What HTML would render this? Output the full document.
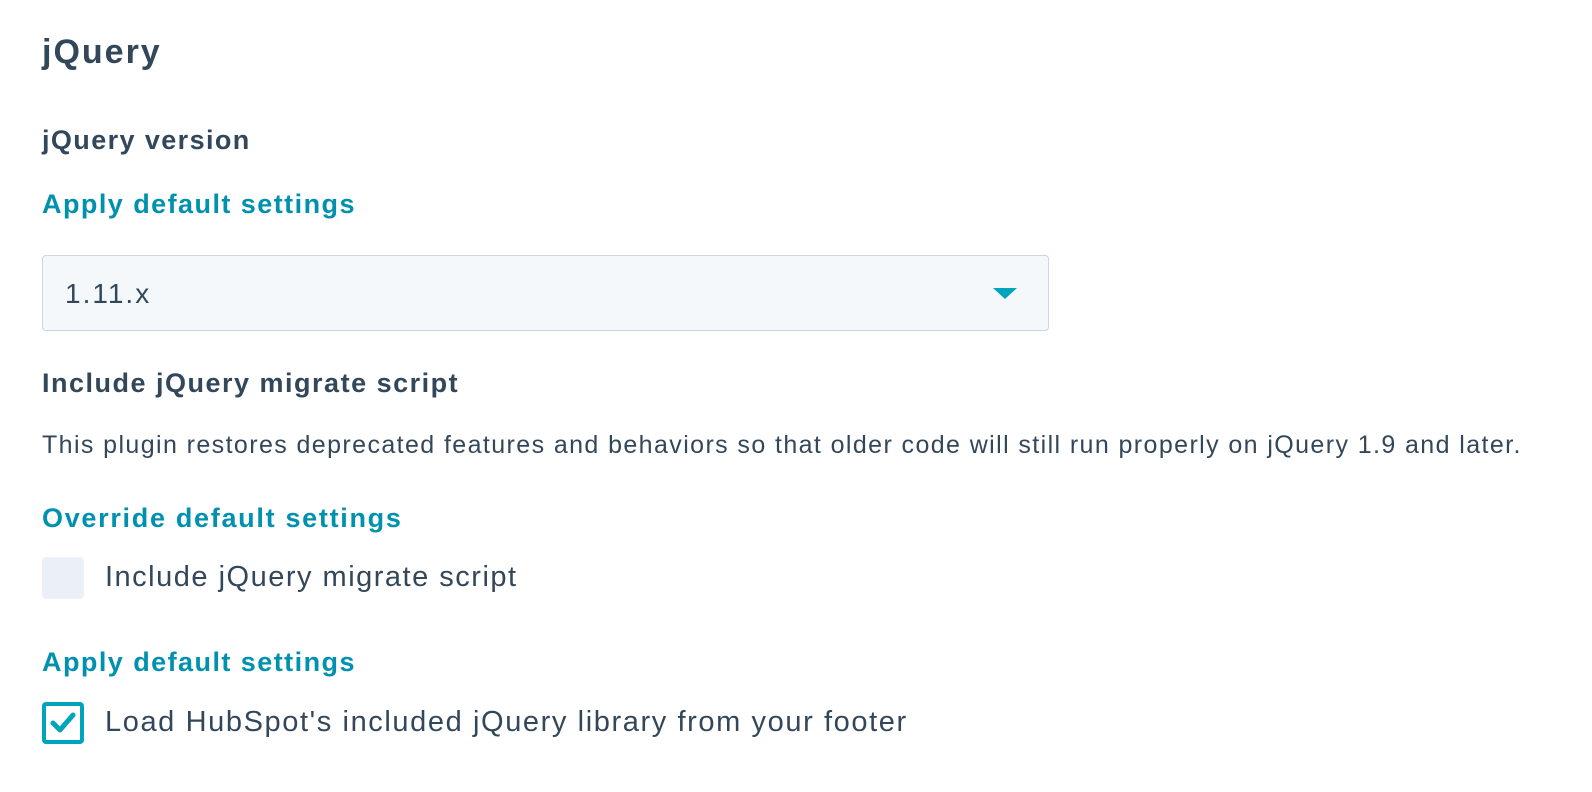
<!DOCTYPE html>
<html><head><meta charset="utf-8"><style>
body{margin:0;width:1592px;height:792px;background:#fff;font-family:"Liberation Sans",sans-serif;color:#33475b;position:relative;overflow:hidden}
.t{position:absolute;left:42px;white-space:nowrap;line-height:1}
.b{font-weight:bold}
.teal{color:#0091ae;font-weight:bold}
.sel{position:absolute;left:42px;top:255px;width:1005px;height:74px;background:#f5f8fa;border:1px solid #cbd6e2;border-radius:4px}
.cb{position:absolute;left:42px;width:42px;height:42px;box-sizing:border-box;border-radius:4px}
</style></head><body>
<div class="t b" style="top:35px;font-size:34px;letter-spacing:2px">jQuery</div>
<div class="t b" style="top:127px;font-size:27px;letter-spacing:1.4px">jQuery version</div>
<div class="t teal" style="top:191px;font-size:27px;letter-spacing:1.45px">Apply default settings</div>
<div class="sel"><div style="position:absolute;left:22px;top:24px;font-size:28px;letter-spacing:2px;line-height:1">1.11.x</div>
<svg style="position:absolute;left:950px;top:32px" width="24" height="12"><path d="M0 0H24L12 11Z" fill="#00a4bd"/></svg></div>
<div class="t b" style="top:370px;font-size:27px;letter-spacing:1.5px">Include jQuery migrate script</div>
<div class="t" style="top:433px;font-size:25px;letter-spacing:1.4px">This plugin restores deprecated features and behaviors so that older code will still run properly on jQuery 1.9 and later.</div>
<div class="t teal" style="top:505px;font-size:27px;letter-spacing:1.7px">Override default settings</div>
<div class="cb" style="top:557px;background:#eaf0f6;border:1px solid #eef2f6"></div>
<div class="t" style="left:105px;top:563px;font-size:29px;letter-spacing:1.5px">Include jQuery migrate script</div>
<div class="t teal" style="top:649px;font-size:27px;letter-spacing:1.45px">Apply default settings</div>
<div class="cb" style="top:702px;border:4px solid #00a4bd;background:#fff">
<svg style="position:absolute;left:4px;top:5px" width="26" height="24"><path d="M3 12L10 19L23 4" fill="none" stroke="#00a4bd" stroke-width="5" stroke-linecap="round" stroke-linejoin="round"/></svg></div>
<div class="t" style="left:105px;top:708px;font-size:29px;letter-spacing:1.6px">Load HubSpot's included jQuery library from your footer</div>
</body></html>
